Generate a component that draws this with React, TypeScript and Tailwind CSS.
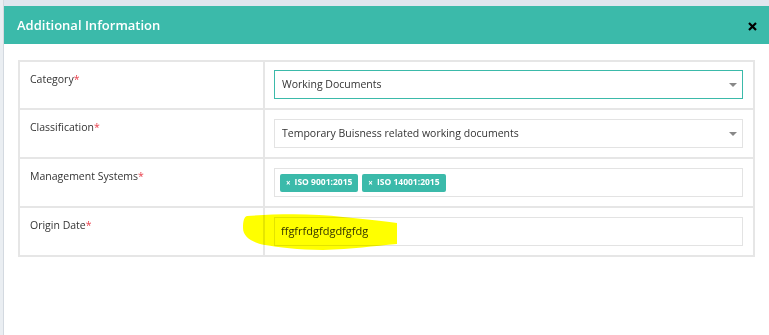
const font = { fontFamily: '"Open Sans", "Liberation Sans", sans-serif' };

function Label({ text }: { text: string }) {
  return (
    <div className="w-[245px] shrink-0 border-r-2 border-[#e6e6e6] px-[10px] pt-[10px] text-[10.5px] text-[#333]">
      {text}
      <span className="text-[#e9414d]">*</span>
    </div>
  );
}

function Caret() {
  return (
    <span className="ml-auto mr-[5px] h-0 w-0 border-x-[4px] border-t-[4px] border-x-transparent border-t-[#888]" />
  );
}

function Tag({ text }: { text: string }) {
  return (
    <span className="flex h-[18px] items-center gap-[4px] rounded-[2px] bg-[#3bbaaa] px-[6px] text-[8.5px] font-bold text-white">
      <span className="text-[8px]">×</span>
      {text}
    </span>
  );
}

export default function App() {
  return (
    <div style={font} className="flex h-[335px] w-[769px] overflow-hidden bg-[#dfe6ee]">
      <div className="w-[4px] shrink-0 border-r border-[#d3d9e0] bg-[#eaeef2]" />
      <div className="mt-[6px] flex flex-1 flex-col bg-white">
        <div className="flex h-[38px] items-center bg-[#3bbaaa] pl-[13px] pr-[12px]">
          <h2 className="pt-[2px] text-[13px] font-semibold text-white">Additional Information</h2>
          <svg className="ml-auto mt-[2px]" width="9" height="9" viewBox="0 0 9 9">
            <path d="M1 1 L8 8 M8 1 L1 8" stroke="#000" strokeWidth="2.2" />
          </svg>
        </div>
        <div className="px-[14px] pt-[16px]">
          <div className="border-2 border-[#e6e6e6]">
            <div className="flex h-[48px] border-b-2 border-[#e6e6e6]">
              <Label text="Category" />
              <div className="flex-1 pl-[9px] pr-[10px] pt-[8px]">
                <div className="flex h-[29px] items-center border border-[#3bbaaa] pl-[7px] text-[10.5px] text-[#333]">
                  Working Documents
                  <Caret />
                </div>
              </div>
            </div>
            <div className="flex h-[49px] border-b-2 border-[#e6e6e6]">
              <Label text="Classification" />
              <div className="flex-1 pl-[9px] pr-[10px] pt-[9px]">
                <div className="flex h-[29px] items-center border border-[#e3e3e3] pl-[7px] text-[10.5px] text-[#333]">
                  Temporary Buisness related working documents
                  <Caret />
                </div>
              </div>
            </div>
            <div className="flex h-[49px] border-b-2 border-[#e6e6e6]">
              <Label text="Management Systems" />
              <div className="flex-1 pl-[9px] pr-[10px] pt-[9px]">
                <div className="flex h-[29px] items-center gap-[4px] border border-[#e3e3e3] pl-[5px]">
                  <Tag text="ISO 9001:2015" />
                  <Tag text="ISO 14001:2015" />
                </div>
              </div>
            </div>
            <div className="flex h-[47px]">
              <Label text="Origin Date" />
              <div className="relative flex-1 pl-[9px] pr-[10px] pt-[9px]">
                <div className="flex h-[29px] items-center border border-[#e3e3e3] pl-[6px] text-[11px] text-[#333]">
                  ffgfrfdgfdgdfgfdg
                </div>
                <svg
                  className="pointer-events-none absolute left-[-22px] top-[5px] mix-blend-multiply"
                  width="160"
                  height="40"
                  viewBox="0 0 160 40"
                >
                  <path
                    d="M4 3 C 30 1, 70 0, 100 4 C 120 6, 140 8, 154 10 L 154 31 C 130 33, 110 36, 80 37 C 55 37, 35 34, 22 32 C 10 30, 0 24, 0 15 C 0 8, 1 4, 4 3 Z"
                    fill="#ffff00"
                  />
                </svg>
              </div>
            </div>
          </div>
        </div>
      </div>
    </div>
  );
}
